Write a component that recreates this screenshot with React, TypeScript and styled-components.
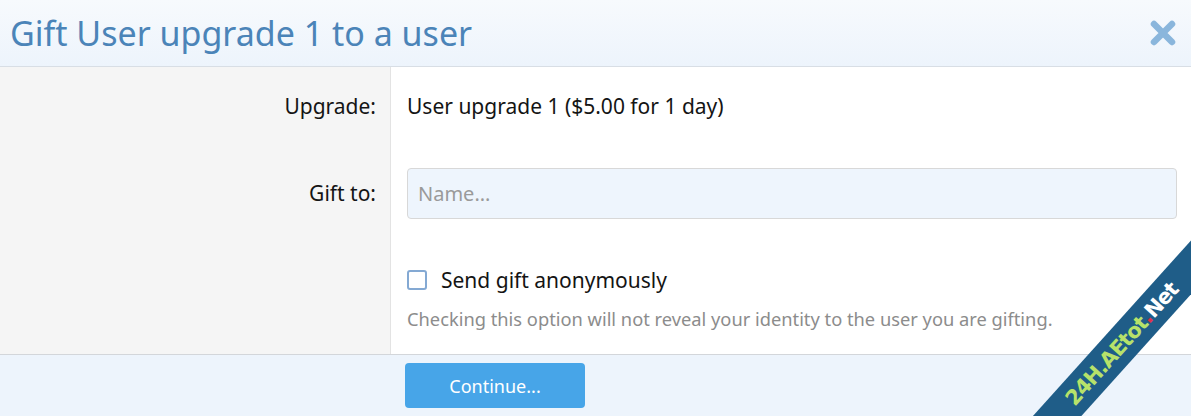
import React from 'react';
import styled, { createGlobalStyle } from 'styled-components';

const GlobalStyle = createGlobalStyle`
  html, body {
    margin: 0;
    padding: 0;
    background: #ffffff;
    overflow: hidden;
  }
  body {
    font-family: "Noto Sans", "Open Sans", sans-serif;
  }
`;

const Overlay = styled.div`
  position: relative;
  width: 1191px;
  height: 416px;
  display: flex;
  flex-direction: column;
  overflow: hidden;
`;

const Header = styled.div`
  height: 67px;
  display: flex;
  align-items: center;
  justify-content: space-between;
  padding: 0 14px 0 10px;
  background: linear-gradient(to bottom, #f7fafd, #edf4fc);
  border-bottom: 1px solid #d8dee5;
  box-sizing: border-box;
`;

const Title = styled.h1`
  margin: 0;
  font-size: 34px;
  font-weight: 400;
  color: #4b84b8;
  letter-spacing: 0;
`;

const CloseButton = styled.button`
  border: none;
  background: none;
  padding: 0;
  width: 28px;
  height: 28px;
  display: flex;
  align-items: center;
  justify-content: center;
  cursor: pointer;
`;

const Body = styled.div`
  flex: 1;
  display: flex;
  flex-direction: column;
  background: linear-gradient(to right, #f5f5f5 390px, #e3e3e3 390px, #e3e3e3 391px, #ffffff 391px);
  border-bottom: 1px solid #d3d6da;
`;

const Row = styled.div<{ $height: number; $top?: number }>`
  display: grid;
  grid-template-columns: 391px 1fr;
  align-items: ${(p) => (p.$top ? 'start' : 'center')};
  padding-top: ${(p) => p.$top || 0}px;
  box-sizing: border-box;
  height: ${(p) => p.$height}px;
`;

const Label = styled.div`
  text-align: right;
  padding-right: 15px;
  font-size: 21px;
  color: #141414;
`;

const Value = styled.div`
  padding: 0 14px 0 16px;
  font-size: 21px;
  color: #141414;
`;

const Input = styled.input`
  width: 100%;
  height: 51px;
  box-sizing: border-box;
  border: 1px solid #d8d8d8;
  border-radius: 4px;
  background: #eef5fd;
  padding: 0 10px;
  font-family: inherit;
  font-size: 20px;
  color: #141414;
  outline: none;
  &::placeholder {
    color: #9a9a9a;
  }
`;

const CheckLabel = styled.label`
  display: flex;
  align-items: center;
  gap: 14px;
  height: 28px;
  font-size: 21px;
  color: #141414;
`;

const Box = styled.span`
  width: 20px;
  height: 20px;
  box-sizing: border-box;
  border: 2px solid #84a9d3;
  border-radius: 3px;
  background: #ffffff;
`;

const Hint = styled.div`
  margin-top: 13px;
  font-size: 18.3px;
  line-height: 24px;
  color: #8c8c8c;
`;

const Footer = styled.div`
  height: 61px;
  display: grid;
  grid-template-columns: 405px auto;
  align-items: center;
  background: #edf4fc;
`;

const Button = styled.button`
  grid-column: 2;
  justify-self: start;
  width: 180px;
  height: 45px;
  border: none;
  border-radius: 4px;
  background: #47a5e8;
  color: #ffffff;
  font-family: inherit;
  font-size: 18px;
`;

const Ribbon = styled.div`
  position: absolute;
  left: 982px;
  top: 326px;
  width: 280px;
  height: 36px;
  background: #1f5d88;
  transform: rotate(-48deg);
  display: flex;
  align-items: center;
  justify-content: center;
  font-family: "DejaVu Sans", sans-serif;
  font-weight: 700;
  font-size: 21px;
  letter-spacing: -1px;
`;

const RibbonPart = styled.span<{ $color: string }>`
  color: ${(p) => p.$color};
`;

function CloseIcon() {
  return (
    <svg width="26" height="26" viewBox="0 0 26 26">
      <path d="M4 4 L22 22 M22 4 L4 22" stroke="#8ab6dc" strokeWidth="6.5" strokeLinecap="round" />
    </svg>
  );
}

export default function App() {
  return (
    <Overlay>
      <GlobalStyle />
      <Header>
        <Title>Gift User upgrade 1 to a user</Title>
        <CloseButton aria-label="Close">
          <CloseIcon />
        </CloseButton>
      </Header>
      <Body>
        <Row $height={78}>
          <Label>Upgrade:</Label>
          <Value>User upgrade 1 ($5.00 for 1 day)</Value>
        </Row>
        <Row $height={96}>
          <Label>Gift to:</Label>
          <Value>
            <Input placeholder="Name..." />
          </Value>
        </Row>
        <Row $height={112} $top={25}>
          <div />
          <Value>
            <CheckLabel>
              <Box />
              Send gift anonymously
            </CheckLabel>
            <Hint>Checking this option will not reveal your identity to the user you are gifting.</Hint>
          </Value>
        </Row>
      </Body>
      <Footer>
        <Button>Continue...</Button>
      </Footer>
      <Ribbon>
        <RibbonPart $color="#b7e26a">24H.AEtot</RibbonPart>
        <RibbonPart $color="#e0304a">.</RibbonPart>
        <RibbonPart $color="#ffffff">Net</RibbonPart>
      </Ribbon>
    </Overlay>
  );
}
